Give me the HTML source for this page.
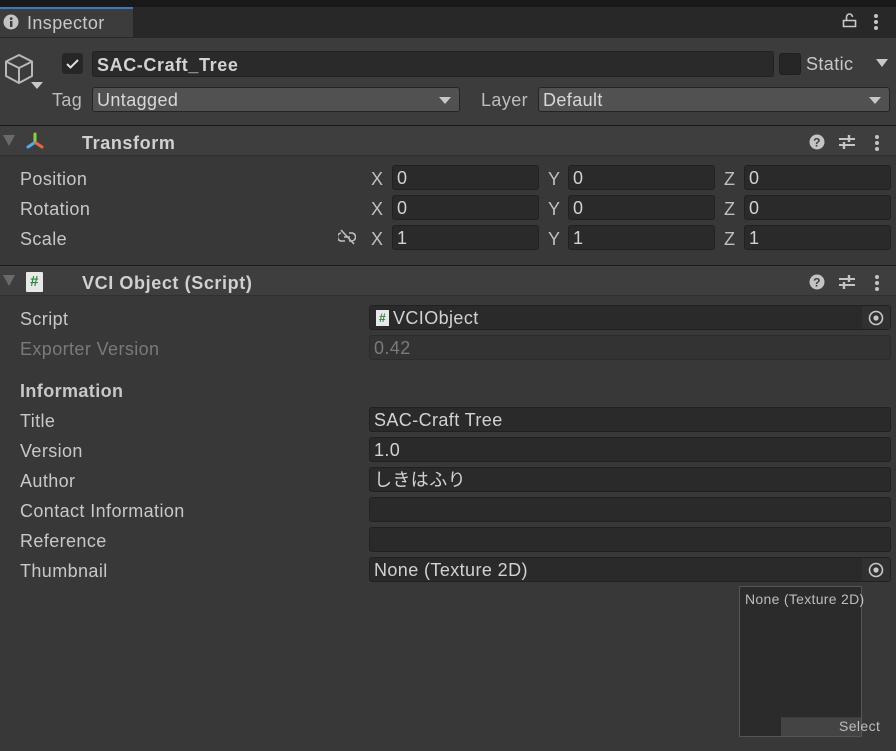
<!DOCTYPE html>
<html><head><meta charset="utf-8">
<style>
*{margin:0;padding:0;box-sizing:border-box}
body{width:896px;height:751px;background:#383838;font-family:"Liberation Sans","Noto Sans CJK JP",sans-serif;font-size:18px;letter-spacing:.4px;color:#c8c8c8;position:relative;overflow:hidden}
.a{position:absolute}
.lbl{position:absolute;left:20px;line-height:20px;margin-top:1px}
.f{position:absolute;background:#2a2a2a;border:1px solid #212121;border-radius:3px;height:25px;line-height:25px;padding-left:4px;color:#d2d2d2;white-space:nowrap;overflow:hidden}
.ax{position:absolute;line-height:20px;color:#c0c0c0;margin-top:1px}
.hdr{position:absolute;left:0;width:896px;height:31px;background:#3e3e3e;border-top:1px solid #1a1a1a;border-bottom:1px solid #303030}
.htitle{position:absolute;left:82px;top:5px;font-weight:bold;color:#d0d0d0;letter-spacing:.6px}
.tri{position:absolute;left:3px;top:10px;width:0;height:0;border-left:6px solid transparent;border-right:6px solid transparent;border-top:11px solid #6a6a6a}
.dd{position:absolute;background:#515151;border:1px solid #242424;border-radius:3px;height:25px;line-height:25px;padding-left:4px;color:#d8d8d8}
.dd:after{content:"";position:absolute;right:8px;top:9px;border-left:6px solid transparent;border-right:6px solid transparent;border-top:7px solid #c8c8c8}
.dots{position:absolute;width:4px}
.dots i{display:block;width:4px;height:4px;background:#c4c4c4;border-radius:2px;margin-bottom:2px}
</style></head><body>
<div class="a" style="left:0;top:0;width:896px;height:7px;background:#191919"></div>
<div class="a" style="left:0;top:7px;width:896px;height:31px;background:#282828"></div>
<div class="a" style="left:0;top:7px;width:133px;height:30px;background:#3c3c3c;border-top:2px solid #3a79bb"></div>
<svg class="a" style="left:3px;top:14px" width="16" height="16"><circle cx="8" cy="8" r="7.5" fill="#c4c4c4"/><rect x="7" y="7" width="2.4" height="6" fill="#3c3c3c"/><circle cx="8.2" cy="4.6" r="1.4" fill="#3c3c3c"/></svg>
<div class="a" style="left:27px;top:13px;color:#c8c8c8">Inspector</div>
<svg class="a" style="left:842px;top:12px" width="16" height="16"><path d="M1.5 8.5h12v6h-12z M4.5 8.5V5a3 3 0 0 1 6 0" fill="none" stroke="#c8c8c8" stroke-width="1.6"/></svg>
<div class="dots" style="left:874px;top:14px"><i></i><i></i><i></i></div>
<div class="a" style="left:0;top:38px;width:896px;height:87px;background:#3c3c3c"></div>
<svg class="a" style="left:3px;top:53px" width="32" height="32"><path d="M16 2L29 8.5V23L16 30L3 23V8.5Z M3 8.5L16 15L29 8.5 M16 15V30" fill="none" stroke="#b8b8b8" stroke-width="2" stroke-linejoin="round"/></svg>
<div class="a" style="left:31px;top:82px;border-left:6px solid transparent;border-right:6px solid transparent;border-top:7px solid #c8c8c8"></div>
<div class="a" style="left:62px;top:53px;width:21px;height:21px;background:#262626;border-radius:3px"></div>
<svg class="a" style="left:65px;top:56px" width="15" height="15"><path d="M2 8l3.5 3.5L13 4" fill="none" stroke="#e0e0e0" stroke-width="2"/></svg>
<div class="f" style="left:92px;top:51px;width:682px;height:26px;line-height:26px;font-weight:bold;letter-spacing:.6px">SAC-Craft_Tree</div>
<div class="a" style="left:779px;top:53px;width:22px;height:22px;background:#262626;border:1px solid #202020;border-radius:3px"></div>
<div class="a" style="left:806px;top:54px">Static</div>
<div class="a" style="left:876px;top:59px;border-left:6px solid transparent;border-right:6px solid transparent;border-top:8px solid #c8c8c8"></div>
<div class="a" style="left:52px;top:90px;color:#bdbdbd">Tag</div>
<div class="dd" style="left:92px;top:87px;width:368px">Untagged</div>
<div class="a" style="left:481px;top:90px;color:#bdbdbd">Layer</div>
<div class="dd" style="left:538px;top:87px;width:352px">Default</div>

<div class="hdr" style="top:125px"></div>
<div class="tri" style="top:135px"></div>
<svg class="a" style="left:24px;top:132px" width="22" height="20"><path d="M11 2v8" stroke="#8cd23c" stroke-width="3" stroke-linecap="round"/><path d="M10 11l-6 4" stroke="#42b4f0" stroke-width="3" stroke-linecap="round"/><path d="M12 11l6 4" stroke="#f0643c" stroke-width="3" stroke-linecap="round"/></svg>
<div class="htitle" style="top:133px">Transform</div>
<svg class="a" style="left:809px;top:134px" width="16" height="16"><circle cx="8" cy="8" r="7.5" fill="#c4c4c4"/><text x="8" y="12.5" font-size="12" font-weight="bold" text-anchor="middle" fill="#3e3e3e" font-family="Liberation Sans">?</text></svg>
<svg class="a" style="left:838px;top:134px" width="18" height="16"><path d="M1 5h16M1 11h16" stroke="#c4c4c4" stroke-width="2"/><path d="M11 1v7M6 8v7" stroke="#c4c4c4" stroke-width="2.4"/></svg>
<div class="dots" style="left:875px;top:135px"><i></i><i></i><i></i></div>

<div class="lbl" style="top:168px">Position</div>
<div class="lbl" style="top:198px">Rotation</div>
<div class="lbl" style="top:228px">Scale</div>
<svg class="a" style="left:338px;top:229px" width="18" height="16"><path d="M3 4a4 4 0 0 0 1 8h3M11 4h2a4 4 0 0 1 1 8h-3M6 8h6M3 1l13 14" fill="none" stroke="#bdbdbd" stroke-width="1.6"/></svg>
<div class="ax" style="left:371px;top:168px">X</div><div class="f" style="left:392px;top:165px;width:147px">0</div>
<div class="ax" style="left:548px;top:168px">Y</div><div class="f" style="left:568px;top:165px;width:147px">0</div>
<div class="ax" style="left:724px;top:168px">Z</div><div class="f" style="left:744px;top:165px;width:147px">0</div>
<div class="ax" style="left:371px;top:198px">X</div><div class="f" style="left:392px;top:195px;width:147px">0</div>
<div class="ax" style="left:548px;top:198px">Y</div><div class="f" style="left:568px;top:195px;width:147px">0</div>
<div class="ax" style="left:724px;top:198px">Z</div><div class="f" style="left:744px;top:195px;width:147px">0</div>
<div class="ax" style="left:371px;top:228px">X</div><div class="f" style="left:392px;top:225px;width:147px">1</div>
<div class="ax" style="left:548px;top:228px">Y</div><div class="f" style="left:568px;top:225px;width:147px">1</div>
<div class="ax" style="left:724px;top:228px">Z</div><div class="f" style="left:744px;top:225px;width:147px">1</div>

<div class="hdr" style="top:265px"></div>
<div class="tri" style="top:275px"></div>
<div class="a" style="left:26px;top:272px;width:17px;height:20px;background:#e8e8e8;border-radius:1px;color:#2a8a3a;font-size:15px;font-weight:bold;text-align:center;line-height:20px">#</div>
<div class="htitle" style="top:273px">VCI Object (Script)</div>
<svg class="a" style="left:809px;top:274px" width="16" height="16"><circle cx="8" cy="8" r="7.5" fill="#c4c4c4"/><text x="8" y="12.5" font-size="12" font-weight="bold" text-anchor="middle" fill="#3e3e3e" font-family="Liberation Sans">?</text></svg>
<svg class="a" style="left:838px;top:274px" width="18" height="16"><path d="M1 5h16M1 11h16" stroke="#c4c4c4" stroke-width="2"/><path d="M11 1v7M6 8v7" stroke="#c4c4c4" stroke-width="2.4"/></svg>
<div class="dots" style="left:875px;top:275px"><i></i><i></i><i></i></div>

<div class="lbl" style="top:308px">Script</div>
<div class="f" style="left:369px;top:305px;width:522px;padding-left:23px">VCIObject</div>
<div class="a" style="left:376px;top:310px;width:13px;height:16px;background:#e8e8e8;color:#2a8a3a;font-size:12px;font-weight:bold;text-align:center;line-height:16px">#</div>
<div class="a" style="left:862px;top:306px;width:28px;height:23px;background:#303030"></div>
<svg class="a" style="left:868px;top:310px" width="16" height="16"><circle cx="8" cy="8" r="6.5" fill="none" stroke="#c8c8c8" stroke-width="1.6"/><circle cx="8" cy="8" r="2.6" fill="#c8c8c8"/></svg>
<div class="lbl" style="top:338px;color:#7a7a7a">Exporter Version</div>
<div class="f" style="left:369px;top:335px;width:522px;background:#333;color:#7a7a7a;border-color:#2c2c2c">0.42</div>
<div class="lbl" style="top:380px;font-weight:bold">Information</div>
<div class="lbl" style="top:410px">Title</div>
<div class="f" style="left:369px;top:407px;width:522px">SAC-Craft Tree</div>
<div class="lbl" style="top:440px">Version</div>
<div class="f" style="left:369px;top:437px;width:522px">1.0</div>
<div class="lbl" style="top:470px">Author</div>
<div class="f" style="left:369px;top:467px;width:522px">しきはふり</div>
<div class="lbl" style="top:500px">Contact Information</div>
<div class="f" style="left:369px;top:497px;width:522px"></div>
<div class="lbl" style="top:530px">Reference</div>
<div class="f" style="left:369px;top:527px;width:522px"></div>
<div class="lbl" style="top:560px">Thumbnail</div>
<div class="f" style="left:369px;top:557px;width:522px">None (Texture 2D)</div>
<div class="a" style="left:862px;top:558px;width:28px;height:23px;background:#303030"></div>
<svg class="a" style="left:868px;top:562px" width="16" height="16"><circle cx="8" cy="8" r="6.5" fill="none" stroke="#c8c8c8" stroke-width="1.6"/><circle cx="8" cy="8" r="2.6" fill="#c8c8c8"/></svg>
<div class="a" style="left:739px;top:586px;width:123px;height:151px;background:#2b2b2b;border:1px solid #555"></div>
<div class="a" style="left:745px;top:591px;font-size:14px;letter-spacing:.3px;color:#bdbdbd">None (Texture 2D)</div>
<div class="a" style="left:781px;top:717px;width:80px;height:19px;background:#444;border-top:1px solid #3a3a3a"></div>
<div class="a" style="left:839px;top:718px;font-size:14px;color:#bdbdbd">Select</div>
</body></html>
